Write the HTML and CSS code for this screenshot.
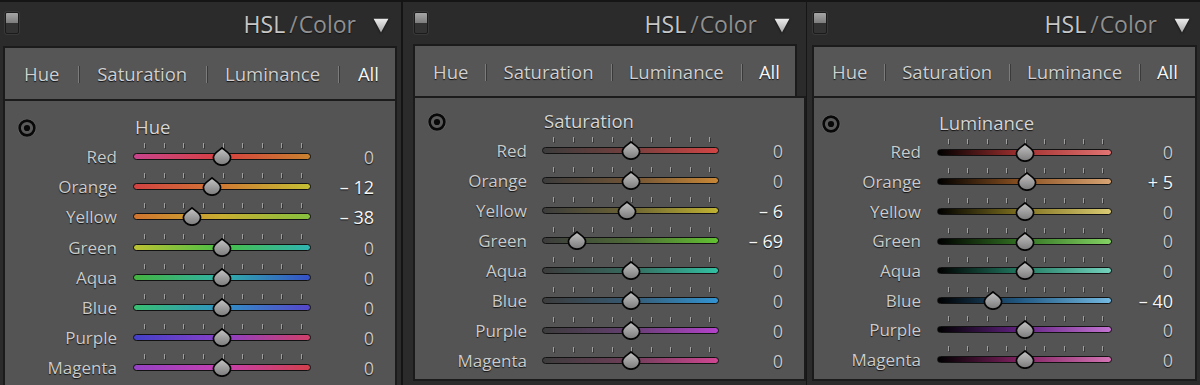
FILE: index.html
```html
<!DOCTYPE html>
<html lang="en">
<head>
<meta charset="utf-8">
<title>HSL / Color</title>
<link rel="stylesheet" href="styles.css">
</head>
<body>
<svg class="defs" width="0" height="0" aria-hidden="true">
  <defs>
    <linearGradient id="tg" x1="0" y1="0" x2="0" y2="1">
      <stop offset="0" stop-color="#c4c4c4"/>
      <stop offset="1" stop-color="#7a7a7a"/>
    </linearGradient>
    <linearGradient id="trig" x1="0" y1="0" x2="0" y2="1">
      <stop offset="0" stop-color="#ececec"/>
      <stop offset="1" stop-color="#a8a8a8"/>
    </linearGradient>
    <symbol id="thumb" viewBox="0 0 20 19">
      <path d="M10 0.9C11.6 2.8 18.6 6 18.6 10.4A8.6 7.8 0 0 1 1.4 10.4C1.4 6 8.4 2.8 10 0.9Z" fill="url(#tg)" stroke="#050505" stroke-width="1.7" stroke-linejoin="round"/>
    </symbol>
    <symbol id="target" viewBox="0 0 20 20">
      <circle cx="10" cy="10" r="9.3" fill="#6c6c6c"/>
      <circle cx="10" cy="10" r="7.4" fill="#5a5a5a" stroke="#080808" stroke-width="2.6"/>
      <circle cx="10" cy="10" r="3.1" fill="#080808"/>
    </symbol>
    <symbol id="tri" viewBox="0 0 16 15">
      <path d="M0.6 0.8H15.4L8 14.4Z" fill="url(#trig)"/>
    </symbol>
  </defs>
</svg>

<div class="strip">
  <!-- Panel 1 : Hue -->
  <section class="panel p1">
    <header class="head">
      <span class="switch"><i></i></span>
      <h2 class="title"><span class="hsl">HSL</span><span class="sl">/</span><span class="col">Color</span></h2>
      <svg class="tri"><use href="#tri"/></svg>
    </header>
    <nav class="tabs"><span>Hue</span><b class="div"></b><span>Saturation</span><b class="div"></b><span>Luminance</span><b class="div"></b><span class="on">All</span></nav>
    <div class="box">
      <svg class="target"><use href="#target"/></svg><div class="sec">Hue</div><span></span>

      <span class="lab">Red</span>
      <div class="slot"><div class="ticks"><i></i><i></i><i></i><i></i><i></i><i></i><i></i><i></i><i></i></div><div class="trk h-red"></div><svg class="thumb" style="left:50%"><use href="#thumb"/></svg></div>
      <span class="val">0</span>

      <span class="lab">Orange</span>
      <div class="slot"><div class="ticks"><i></i><i></i><i></i><i></i><i></i><i></i><i></i><i></i><i></i></div><div class="trk h-orange"></div><svg class="thumb" style="left:44.6%"><use href="#thumb"/></svg></div>
      <span class="val nz">– 12</span>

      <span class="lab">Yellow</span>
      <div class="slot"><div class="ticks"><i></i><i></i><i></i><i></i><i></i><i></i><i></i><i></i><i></i></div><div class="trk h-yellow"></div><svg class="thumb" style="left:33.2%"><use href="#thumb"/></svg></div>
      <span class="val nz">– 38</span>

      <span class="lab">Green</span>
      <div class="slot"><div class="ticks"><i></i><i></i><i></i><i></i><i></i><i></i><i></i><i></i><i></i></div><div class="trk h-green"></div><svg class="thumb" style="left:50%"><use href="#thumb"/></svg></div>
      <span class="val">0</span>

      <span class="lab">Aqua</span>
      <div class="slot"><div class="ticks"><i></i><i></i><i></i><i></i><i></i><i></i><i></i><i></i><i></i></div><div class="trk h-aqua"></div><svg class="thumb" style="left:50%"><use href="#thumb"/></svg></div>
      <span class="val">0</span>

      <span class="lab">Blue</span>
      <div class="slot"><div class="ticks"><i></i><i></i><i></i><i></i><i></i><i></i><i></i><i></i><i></i></div><div class="trk h-blue"></div><svg class="thumb" style="left:50%"><use href="#thumb"/></svg></div>
      <span class="val">0</span>

      <span class="lab">Purple</span>
      <div class="slot"><div class="ticks"><i></i><i></i><i></i><i></i><i></i><i></i><i></i><i></i><i></i></div><div class="trk h-purple"></div><svg class="thumb" style="left:50%"><use href="#thumb"/></svg></div>
      <span class="val">0</span>

      <span class="lab">Magenta</span>
      <div class="slot"><div class="ticks"><i></i><i></i><i></i><i></i><i></i><i></i><i></i><i></i><i></i></div><div class="trk h-magenta"></div><svg class="thumb" style="left:50%"><use href="#thumb"/></svg></div>
      <span class="val">0</span>
    </div>
  </section>

  <div class="sep"></div>

  <!-- Panel 2 : Saturation -->
  <section class="panel p2">
    <header class="head">
      <span class="switch"><i></i></span>
      <h2 class="title"><span class="hsl">HSL</span><span class="sl">/</span><span class="col">Color</span></h2>
      <svg class="tri"><use href="#tri"/></svg>
    </header>
    <nav class="tabs"><span>Hue</span><b class="div"></b><span>Saturation</span><b class="div"></b><span>Luminance</span><b class="div"></b><span class="on">All</span></nav>
    <div class="box">
      <svg class="target"><use href="#target"/></svg><div class="sec">Saturation</div><span></span>

      <span class="lab">Red</span>
      <div class="slot"><div class="ticks"><i></i><i></i><i></i><i></i><i></i><i></i><i></i><i></i><i></i></div><div class="trk s-red"></div><svg class="thumb" style="left:50%"><use href="#thumb"/></svg></div>
      <span class="val">0</span>

      <span class="lab">Orange</span>
      <div class="slot"><div class="ticks"><i></i><i></i><i></i><i></i><i></i><i></i><i></i><i></i><i></i></div><div class="trk s-orange"></div><svg class="thumb" style="left:50%"><use href="#thumb"/></svg></div>
      <span class="val">0</span>

      <span class="lab">Yellow</span>
      <div class="slot"><div class="ticks"><i></i><i></i><i></i><i></i><i></i><i></i><i></i><i></i><i></i></div><div class="trk s-yellow"></div><svg class="thumb" style="left:48.2%"><use href="#thumb"/></svg></div>
      <span class="val nz">– 6</span>

      <span class="lab">Green</span>
      <div class="slot"><div class="ticks"><i></i><i></i><i></i><i></i><i></i><i></i><i></i><i></i><i></i></div><div class="trk s-green"></div><svg class="thumb" style="left:19.9%"><use href="#thumb"/></svg></div>
      <span class="val nz">– 69</span>

      <span class="lab">Aqua</span>
      <div class="slot"><div class="ticks"><i></i><i></i><i></i><i></i><i></i><i></i><i></i><i></i><i></i></div><div class="trk s-aqua"></div><svg class="thumb" style="left:50%"><use href="#thumb"/></svg></div>
      <span class="val">0</span>

      <span class="lab">Blue</span>
      <div class="slot"><div class="ticks"><i></i><i></i><i></i><i></i><i></i><i></i><i></i><i></i><i></i></div><div class="trk s-blue"></div><svg class="thumb" style="left:50%"><use href="#thumb"/></svg></div>
      <span class="val">0</span>

      <span class="lab">Purple</span>
      <div class="slot"><div class="ticks"><i></i><i></i><i></i><i></i><i></i><i></i><i></i><i></i><i></i></div><div class="trk s-purple"></div><svg class="thumb" style="left:50%"><use href="#thumb"/></svg></div>
      <span class="val">0</span>

      <span class="lab">Magenta</span>
      <div class="slot"><div class="ticks"><i></i><i></i><i></i><i></i><i></i><i></i><i></i><i></i><i></i></div><div class="trk s-magenta"></div><svg class="thumb" style="left:50%"><use href="#thumb"/></svg></div>
      <span class="val">0</span>
    </div>
  </section>

  <!-- Panel 3 : Luminance -->
  <section class="panel p3">
    <header class="head">
      <span class="switch"><i></i></span>
      <h2 class="title"><span class="hsl">HSL</span><span class="sl">/</span><span class="col">Color</span></h2>
      <svg class="tri"><use href="#tri"/></svg>
    </header>
    <nav class="tabs"><span>Hue</span><b class="div"></b><span>Saturation</span><b class="div"></b><span>Luminance</span><b class="div"></b><span class="on">All</span></nav>
    <div class="box">
      <svg class="target"><use href="#target"/></svg><div class="sec">Luminance</div><span></span>

      <span class="lab">Red</span>
      <div class="slot"><div class="ticks"><i></i><i></i><i></i><i></i><i></i><i></i><i></i><i></i><i></i></div><div class="trk l-red"></div><svg class="thumb" style="left:50%"><use href="#thumb"/></svg></div>
      <span class="val">0</span>

      <span class="lab">Orange</span>
      <div class="slot"><div class="ticks"><i></i><i></i><i></i><i></i><i></i><i></i><i></i><i></i><i></i></div><div class="trk l-orange"></div><svg class="thumb" style="left:51.4%"><use href="#thumb"/></svg></div>
      <span class="val nz">+ 5</span>

      <span class="lab">Yellow</span>
      <div class="slot"><div class="ticks"><i></i><i></i><i></i><i></i><i></i><i></i><i></i><i></i><i></i></div><div class="trk l-yellow"></div><svg class="thumb" style="left:50%"><use href="#thumb"/></svg></div>
      <span class="val">0</span>

      <span class="lab">Green</span>
      <div class="slot"><div class="ticks"><i></i><i></i><i></i><i></i><i></i><i></i><i></i><i></i><i></i></div><div class="trk l-green"></div><svg class="thumb" style="left:50%"><use href="#thumb"/></svg></div>
      <span class="val">0</span>

      <span class="lab">Aqua</span>
      <div class="slot"><div class="ticks"><i></i><i></i><i></i><i></i><i></i><i></i><i></i><i></i><i></i></div><div class="trk l-aqua"></div><svg class="thumb" style="left:50%"><use href="#thumb"/></svg></div>
      <span class="val">0</span>

      <span class="lab">Blue</span>
      <div class="slot"><div class="ticks"><i></i><i></i><i></i><i></i><i></i><i></i><i></i><i></i><i></i></div><div class="trk l-blue"></div><svg class="thumb" style="left:32.2%"><use href="#thumb"/></svg></div>
      <span class="val nz">– 40</span>

      <span class="lab">Purple</span>
      <div class="slot"><div class="ticks"><i></i><i></i><i></i><i></i><i></i><i></i><i></i><i></i><i></i></div><div class="trk l-purple"></div><svg class="thumb" style="left:50%"><use href="#thumb"/></svg></div>
      <span class="val">0</span>

      <span class="lab">Magenta</span>
      <div class="slot"><div class="ticks"><i></i><i></i><i></i><i></i><i></i><i></i><i></i><i></i><i></i></div><div class="trk l-magenta"></div><svg class="thumb" style="left:50%"><use href="#thumb"/></svg></div>
      <span class="val">0</span>
    </div>
  </section>
</div>
</body>
</html>
```

FILE: styles.css
```css
* { box-sizing: border-box; }

html, body {
  margin: 0;
  padding: 0;
  background: #141414;
}

body {
  font-family: "Open Sans", "Liberation Sans", sans-serif;
  color: #c6c6c6;
}

.defs { position: absolute; width: 0; height: 0; overflow: hidden; }

.strip {
  display: flex;
  height: 385px;
  overflow: hidden;
}

.panel {
  display: flex;
  flex-direction: column;
  background: #2b2b2b;
  flex: none;
}

.p1 { width: 401px; }
.sep { width: 2px; flex: none; background: #141414; }
.p2 { width: 403px; }
.p3 { width: 394px; border-left: 1px solid #161616; }

/* ---------- header ---------- */
.head {
  display: flex;
  align-items: flex-start;
  border-top: 2px solid #151515;
  padding-top: 10px;
  flex: none;
}
.p1 .head { height: 46px; padding-left: 5px; padding-right: 12px; }
.p2 .head { height: 44px; padding-left: 11px; padding-right: 16px; }
.p3 .head { height: 45px; padding-left: 6px; padding-right: 10px; }

.switch {
  width: 14px;
  height: 22px;
  border: 1px solid #1b1b1b;
  border-radius: 2px;
  background: #333;
  display: flex;
  flex-direction: column;
  box-shadow: 0 0 0 1px #383838;
  overflow: hidden;
}
.switch i {
  height: 10px;
  background: linear-gradient(#a6a6a6, #7d7d7d);
}

.title {
  margin: -1px 0 0 auto;
  font-weight: 400;
  font-size: 23px;
  line-height: 27px;
  color: #c6c6c6;
  text-shadow: 0 1px 1px rgba(0,0,0,.6);
}
.title .sl { color: #8c8c8c; margin: 0 1px 0 4px; }
.title .col { color: #909090; }

.tri {
  width: 16px;
  height: 15px;
  margin: 6px 0 0 17px;
  filter: drop-shadow(0 1px 1px rgba(0,0,0,.6));
}

/* ---------- tabs ---------- */
.tabs {
  display: flex;
  align-items: center;
  justify-content: space-between;
  border: 2px solid #1b1b1b;
  border-bottom: 0;
  background: #565656;
  font-size: 18.5px;
  color: #d0d0d0;
  text-shadow: 0 1px 1px rgba(0,0,0,.8);
  flex: none;
}
.p1 .tabs { height: 53px; margin: 0 4px 0 3px; padding: 0 16px 0 19px; }
.p2 .tabs { height: 52px; margin: 0 9px 0 10px; padding: 0 15px 0 18px; }
.p3 .tabs { height: 51px; margin: 0 3px 0 5px; padding: 0 17px 0 18px; }

.tabs .on { color: #f6f6f6; }
.tabs .div {
  width: 1px;
  height: 17px;
  background: #7c7c7c;
  box-shadow: 1px 0 0 #3a3a3a;
  margin-top: 2px;
}

/* ---------- content box ---------- */
.box {
  border: 2px solid #1b1b1b;
  background: #545454;
  display: grid;
  align-content: start;
  flex: none;
}
.p1 .box {
  height: 292px;
  margin: 0 4px 0 3px;
  padding-top: 11px;
  grid-template-columns: 128px 178px 63px;
  grid-auto-rows: 30.15px;
}
.p2 .box {
  height: 285px;
  margin: 0 0 0 10px;
  padding-top: 8px;
  grid-template-columns: 127px 177px 64px;
  grid-auto-rows: 30px;
}
.p3 .box {
  height: 285px;
  margin: 0 3px 0 5px;
  padding-top: 10px;
  grid-template-columns: 123px 175px 61px;
  grid-auto-rows: 29.65px;
}

.target {
  width: 20px;
  height: 20px;
  align-self: center;
  margin-left: 12px;
  margin-top: 2px;
}
.p3 .target { margin-left: 7px; }

.sec {
  align-self: center;
  padding-left: 2px;
  font-size: 18.5px;
  color: #d6d6d6;
  text-shadow: 0 1px 1px rgba(0,0,0,.8);
  line-height: 22px;
}

.lab {
  align-self: center;
  text-align: right;
  padding-right: 16px;
  font-size: 17px;
  line-height: 22px;
  color: #cbcbcb;
  text-shadow: 0 1px 1px rgba(0,0,0,.8);
}
.p2 .lab { padding-right: 15px; }

.val {
  align-self: center;
  text-align: right;
  font-size: 18px;
  line-height: 22px;
  color: #c4c4c4;
  text-shadow: 0 1px 1px rgba(0,0,0,.8);
}
.val.nz { color: #f6f6f6; }

/* ---------- slider ---------- */
.slot {
  position: relative;
  display: flex;
  flex-direction: column;
  padding-top: 1px;
}
.ticks {
  height: 5px;
  margin-bottom: 5px;
  display: flex;
  justify-content: space-between;
  padding: 0 9px 0 11px;
}
.ticks i {
  width: 1px;
  background: #a0a0a0;
  box-shadow: 1px 1px 0 rgba(0,0,0,.35);
}
.trk {
  height: 7px;
  border: 1.5px solid #121212;
  border-radius: 4px;
}
.thumb {
  position: absolute;
  top: 5px;
  width: 20px;
  height: 19px;
  margin-left: -10px;
}

/* hue tracks */
.h-red     { background: linear-gradient(90deg, #c8448c, #d6403f 50%, #c8822f); }
.h-orange  { background: linear-gradient(90deg, #d24242, #d07a33 50%, #c4c034); }
.h-yellow  { background: linear-gradient(90deg, #d0742f, #c8ae32 50%, #86c03e); }
.h-green   { background: linear-gradient(90deg, #bcc233, #48c046 50%, #2fb4b2); }
.h-aqua    { background: linear-gradient(90deg, #44b440, #30b2a8 50%, #3650c8); }
.h-blue    { background: linear-gradient(90deg, #38c072, #3092c4 50%, #5646cc); }
.h-purple  { background: linear-gradient(90deg, #4440c8, #8a40c8 50%, #d0406a); }
.h-magenta { background: linear-gradient(90deg, #9442c4, #c640b0 50%, #d2404c); }

/* saturation tracks */
.s-red     { background: linear-gradient(90deg, #3c3c3c, #74403e 50%, #d24545); }
.s-orange  { background: linear-gradient(90deg, #3c3c3c, #705436 50%, #c88736); }
.s-yellow  { background: linear-gradient(90deg, #3c3c3c, #6c6434 50%, #c0b232); }
.s-green   { background: linear-gradient(90deg, #3c3c3c, #4e6a36 50%, #62c232); }
.s-aqua    { background: linear-gradient(90deg, #3c3c3c, #366a5e 50%, #32c0a2); }
.s-blue    { background: linear-gradient(90deg, #3c3c3c, #365a72 50%, #3294d2); }
.s-purple  { background: linear-gradient(90deg, #3c3c3c, #643f70 50%, #b442cc); }
.s-magenta { background: linear-gradient(90deg, #3c3c3c, #6e3e58 50%, #d04692); }

/* luminance tracks */
.l-red     { background: linear-gradient(90deg, #000, #a23030 48%, #e27474); }
.l-orange  { background: linear-gradient(90deg, #000, #8c5222 48%, #d8a474); }
.l-yellow  { background: linear-gradient(90deg, #000, #807220 48%, #dacb74); }
.l-green   { background: linear-gradient(90deg, #000, #327222 48%, #84d264); }
.l-aqua    { background: linear-gradient(90deg, #000, #227a62 48%, #74d2bc); }
.l-blue    { background: linear-gradient(90deg, #000, #225a84 48%, #74bae2); }
.l-purple  { background: linear-gradient(90deg, #000, #622282 48%, #c474d2); }
.l-magenta { background: linear-gradient(90deg, #000, #822262 48%, #d474b4); }
```
